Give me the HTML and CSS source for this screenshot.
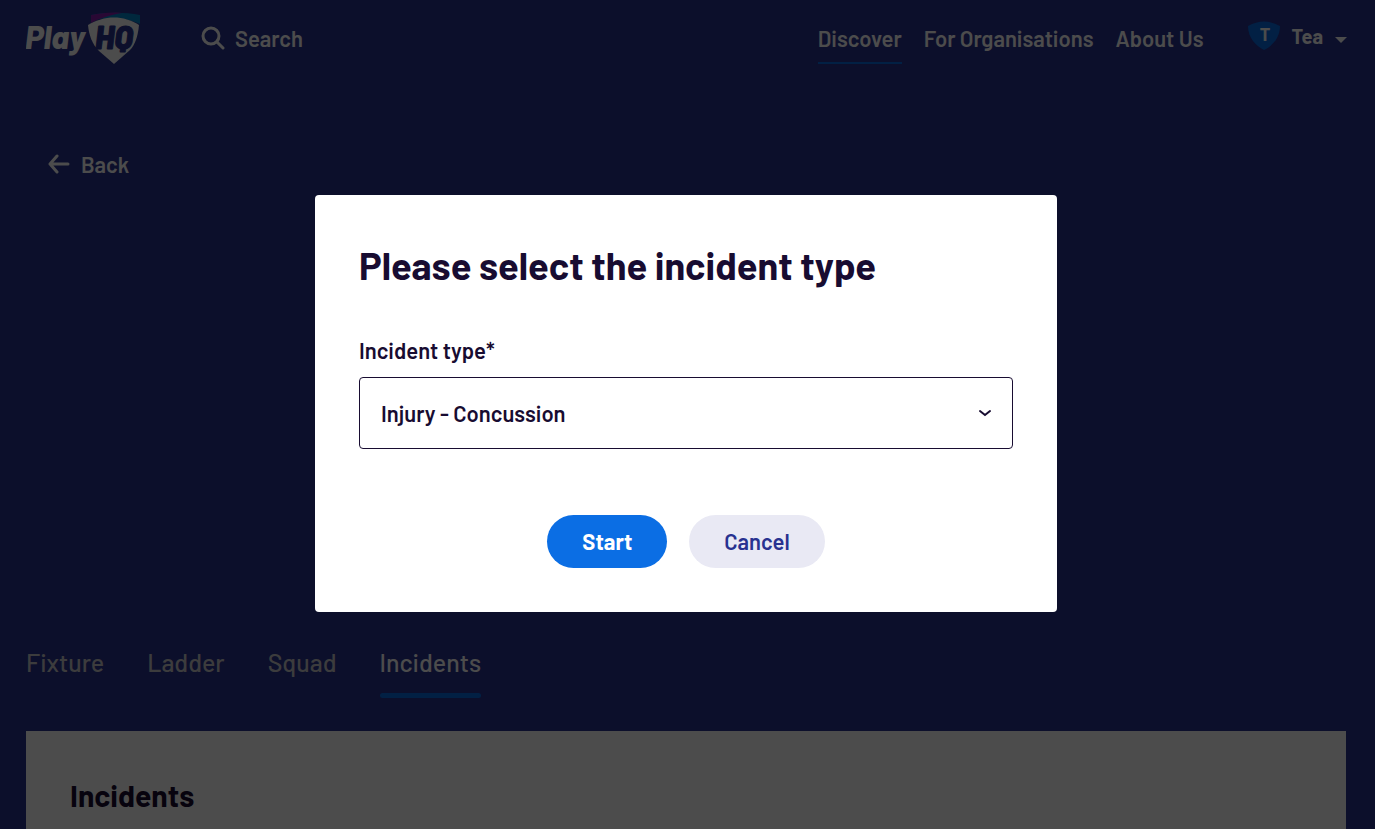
FILE: index.html
```html
<!DOCTYPE html>
<html lang="en">
<head>
    <meta charset="UTF-8">
    <meta name="viewport" content="width=device-width, initial-scale=1.0">
    <title>PlayHQ - Incidents</title>
    <link rel="stylesheet" href="styles.css">
</head>
<body>
    <header class="header">
        <a class="logo" href="#" aria-label="PlayHQ home">
            <svg width="116" height="56" viewBox="0 -2 116 56">
                <path d="M65 3C80 0 99 0 114 3V12C100 5 80 4 65 9Z" fill="#0088cc"/>
                <path d="M65 3C75 1 87 0 96 1C84 3 74 6 65 11Z" fill="#8a1bb0"/>
                <path d="M62 13C78 3 98 3 113 13C112 24 109 33 104 38L88 52L73 39C66 32 63 23 62 13Z" fill="#fff"/>
                <text class="logo-play" x="-1" y="37">Play</text>
                <text class="logo-hq" x="69" y="37">HQ</text>
            </svg>
        </a>
        <a class="search" href="#">
            <svg width="24" height="24" viewBox="0 0 24 24" fill="none" stroke="#fff" stroke-width="3" stroke-linecap="round">
                <circle cx="10" cy="10" r="8"/>
                <path d="M16 16l6 6"/>
            </svg>
            Search
        </a>
        <nav class="nav">
            <a class="nav-link active" href="#">Discover</a>
            <a class="nav-link" href="#">For Organisations</a>
            <a class="nav-link" href="#">About Us</a>
        </nav>
        <button class="account" type="button">
            <svg width="32" height="30" viewBox="0 0 32 30">
                <path d="M0 5Q16-4 32 5C32 17 24 25 16 29C8 25 0 17 0 5Z" fill="#076ce3"/>
                <text class="account-initial" x="17" y="20" text-anchor="middle">T</text>
            </svg>
            <span>Tea</span>
            <span class="caret"></span>
        </button>
    </header>

    <main class="page">
        <section class="hero">
            <a class="back" href="#">
                <svg width="22" height="20" viewBox="0 0 22 20" fill="none" stroke="#fff" stroke-width="3" stroke-linecap="round" stroke-linejoin="round">
                    <path d="M20 10H2M9 2L2 10L9 18"/>
                </svg>
                Back
            </a>
        </section>
        <nav class="tabs">
            <a class="tab" href="#">Fixture</a>
            <a class="tab" href="#">Ladder</a>
            <a class="tab" href="#">Squad</a>
            <a class="tab active" href="#">Incidents</a>
        </nav>
        <section class="card">
            <h2 class="card-title">Incidents</h2>
        </section>
    </main>

    <div class="overlay">
        <form class="modal" role="dialog" aria-modal="true" aria-labelledby="modal-title">
            <h1 class="modal-title" id="modal-title">Please select the incident type</h1>
            <label class="label" for="incident-type">Incident type*</label>
            <div class="select-wrap">
                <select class="select" id="incident-type">
                    <option>Injury - Concussion</option>
                </select>
                <svg class="chevron" width="12" height="8" viewBox="0 0 12 8" fill="none" stroke="#180c31" stroke-width="2" stroke-linecap="round">
                    <path d="M1 2L6 6L11 2"/>
                </svg>
            </div>
            <div class="actions">
                <button class="btn btn-primary" type="button">Start</button>
                <button class="btn btn-secondary" type="button">Cancel</button>
            </div>
        </form>
    </div>
</body>
</html>
```

FILE: styles.css
```css
* {
    box-sizing: border-box;
}

body {
    display: flex;
    flex-direction: column;
    min-height: 100vh;
    margin: 0;
    background: #283290;
    color: #fff;
    font-family: Barlow, Roboto, sans-serif;
    font-size: 22px;
    font-weight: 600;
    line-height: 26px;
}

a {
    color: inherit;
    text-decoration: none;
}

button,
select {
    font: inherit;
}

svg {
    display: block;
    flex-shrink: 0;
}

.header {
    display: flex;
    align-items: center;
    height: 76px;
    padding: 0 28px 0 26px;
}

.logo-play,
.logo-hq {
    font-size: 32px;
    font-style: italic;
    font-weight: 800;
}

.logo-play {
    fill: #fff;
}

.logo-hq {
    fill: #283290;
    stroke: #283290;
    stroke-width: 1px;
}

.search {
    display: flex;
    align-items: center;
    gap: 10px;
    margin-left: 59px;
}

.nav {
    display: flex;
    gap: 22px;
    margin-left: auto;
}

.nav-link {
    padding: 12px 0 11px;
    border-bottom: 2px solid transparent;
}

.nav-link.active {
    border-color: #076ce3;
}

.account {
    display: flex;
    align-items: center;
    gap: 12px;
    margin-left: 44px;
    padding: 0 0 4px;
    border: 0;
    background: none;
    color: #fff;
    font-size: 20px;
    font-weight: 700;
}

.account-initial {
    font-size: 18px;
    fill: #fff;
}

.caret {
    margin-top: 8px;
    border: 6px solid transparent;
    border-top-color: #fff;
    border-bottom: 0;
}

.page {
    display: flex;
    flex: 1;
    flex-direction: column;
    padding: 0 29px 0 26px;
}

.hero {
    height: 562px;
    padding: 75px 22px 0;
}

.back {
    display: inline-flex;
    align-items: center;
    gap: 11px;
}

.tabs {
    display: flex;
    gap: 43px;
    font-size: 25px;
    font-weight: 500;
}

.tab {
    padding: 11px 0 23px;
    color: #c8c8cc;
}

.tab.active {
    position: relative;
    color: #fff;
}

.tab.active::after {
    content: "";
    position: absolute;
    right: 0;
    bottom: 0;
    left: 0;
    height: 5px;
    border-radius: 3px;
    background: #076ce3;
}

.card {
    flex: 1;
    margin-top: 33px;
    padding: 44px 44px 0;
    background: #fff;
    color: #180c31;
}

.card-title {
    margin: 0;
    font-size: 30px;
    font-weight: 700;
    line-height: 40px;
}

.overlay {
    position: fixed;
    inset: 0;
    display: flex;
    align-items: center;
    justify-content: center;
    padding: 0 3px 22px 0;
    background: rgba(0, 0, 0, 0.7);
}

.modal {
    width: 742px;
    max-width: 100%;
    padding: 44px;
    border-radius: 4px;
    background: #fff;
    color: #180c31;
}

.modal-title {
    margin: 0 0 46px;
    font-size: 38px;
    font-weight: 700;
    line-height: 52px;
}

.label {
    display: block;
    margin-bottom: 14px;
    font-weight: 600;
}

.select-wrap {
    position: relative;
}

.select {
    display: block;
    width: 100%;
    height: 72px;
    padding: 0 21px;
    border: 1px solid #180c31;
    border-radius: 4px;
    background: #fff;
    color: #180c31;
    font-weight: 600;
    appearance: none;
}

.chevron {
    position: absolute;
    top: 32px;
    right: 22px;
    pointer-events: none;
}

.actions {
    display: flex;
    justify-content: center;
    gap: 22px;
    margin-top: 66px;
}

.btn {
    height: 53px;
    padding: 0 35px 1px;
    border: 0;
    border-radius: 27px;
}

.btn-primary {
    background: #0b6ee4;
    color: #fff;
    font-weight: 700;
}

.btn-secondary {
    background: #e9e9f4;
    color: #283290;
}
```
